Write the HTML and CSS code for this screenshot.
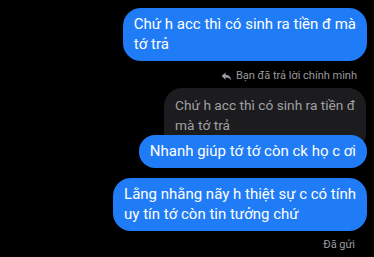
FILE: index.html
```html
<!DOCTYPE html>
<html>
<head>
<meta charset="utf-8">
<link rel="stylesheet" href="styles.css">
</head>
<body>
<div class="chat">
  <div class="bubble sent b1">Chứ h acc thì có sinh ra tiền đ mà<br>tớ trả</div>
  <div class="reply-label"><svg class="reply-icon" viewBox="0 0 12 10" width="11" height="9"><path d="M5 0.5 L0.5 4.5 L5 8.5 L5 6 C8 6 10 7 11.5 9.5 C11 6 9 3.2 5 3 Z" fill="#9a9a9f"/></svg>Bạn đã trả lời chính mình</div>
  <div class="bubble quote">Chứ h acc thì có sinh ra tiền đ<br>mà tớ trả</div>
  <div class="bubble sent b3">Nhanh giúp tớ tớ còn ck họ c ơi</div>
  <div class="bubble sent b4">Lằng nhằng nãy h thiệt sự c có tính<br>uy tín tớ còn tin tưởng chứ</div>
  <div class="status">Đã gửi</div>
</div>
</body>
</html>
```
FILE: styles.css
```css
html, body {
  margin: 0;
  padding: 0;
  background: #000;
}
body {
  width: 374px;
  height: 257px;
  overflow: hidden;
  font-family: Roboto, "Noto Sans", sans-serif;
}
.chat {
  display: flex;
  flex-direction: column;
  align-items: flex-end;
  padding: 8px 7px 0 0;
}
.bubble {
  font-size: 15px;
  line-height: 20px;
  padding: 6px 11px 7px 11px;
  border-radius: 18px;
  white-space: nowrap;
}
.sent {
  background: #1f7bf6;
  color: #fff;
}
.reply-label {
  margin-top: 8px;
  margin-right: 10px;
  font-size: 11px;
  line-height: 14px;
  color: #9a9a9f;
  display: flex;
  align-items: center;
  gap: 4px;
}
.quote {
  margin-top: 5px;
  margin-right: 1px;
  font-size: 13.7px;
  background: #1c1c1e;
  color: #a0a0a5;
  padding: 7px 11px 16px 11px;
  position: relative;
  z-index: 0;
}
.b3 {
  margin-top: -16px;
  position: relative;
  z-index: 1;
  border-radius: 16px;
}
.b4 {
  margin-top: 10px;
}
.status {
  margin-top: 7px;
  margin-right: 12px;
  font-size: 11px;
  line-height: 14px;
  color: #9a9a9f;
}
```
